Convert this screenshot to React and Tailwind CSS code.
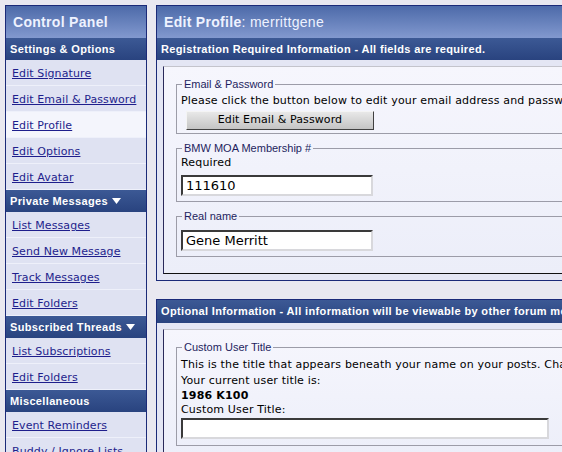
import React from "react";

const sections = [
  {
    title: "Settings & Options",
    arrow: false,
    items: ["Edit Signature", "Edit Email & Password", "Edit Profile", "Edit Options", "Edit Avatar"],
  },
  {
    title: "Private Messages",
    arrow: true,
    items: ["List Messages", "Send New Message", "Track Messages", "Edit Folders"],
  },
  {
    title: "Subscribed Threads",
    arrow: true,
    items: ["List Subscriptions", "Edit Folders"],
  },
  {
    title: "Miscellaneous",
    arrow: false,
    items: ["Event Reminders", "Buddy / Ignore Lists", "Profile Pictures"],
  },
];

const Arrow = () => (
  <svg width="9" height="6" viewBox="0 0 9 6" className="ml-[4px]">
    <path d="M0 0 H9 L4.5 6 Z" fill="#ffffff" />
  </svg>
);

const BigHeader = ({ children }) => (
  <div className="h-[32px] flex items-center bg-linear-to-b from-[#4d6aa9] to-[#8299cf] text-[#eef2ff] text-[14px] font-bold tracking-[0.3px] font-['Liberation_Sans',sans-serif]">
    {children}
  </div>
);

const SubBar = ({ children, className = "" }) => (
  <div
    className={
      "h-[22px] flex items-center bg-linear-to-b from-[#3c5995] to-[#29437f] text-white text-[11px] font-bold tracking-[0.35px] font-['Liberation_Sans',sans-serif] whitespace-nowrap " +
      className
    }
  >
    {children}
  </div>
);

const Fieldset = ({ legend, className = "", children }) => (
  <fieldset className={"border border-[#9c9ca8] pl-[4px] " + className}>
    <legend className="ml-[1px] px-[2px] text-[11px] leading-[13px] text-[#1e1e5e] font-['Liberation_Sans',sans-serif]">
      {legend}
    </legend>
    {children}
  </fieldset>
);

const TextInput = ({ value, width }) => (
  <div
    className={
      "h-[21px] flex items-center pl-[3px] bg-white border-2 border-t-[#3a3a3a] border-l-[#3a3a3a] border-r-[#d8d8dc] border-b-[#d8d8dc] text-[13px] text-black " +
      width
    }
  >
    {value}
  </div>
);

const Sidebar = () => (
  <div className="w-[142px] shrink-0 border border-[#1b2a78] bg-[#dfe2f2]">
    <BigHeader>
      <span className="pl-[7px]">Control Panel</span>
    </BigHeader>
    {sections.map((s) => (
      <div key={s.title}>
        <SubBar className="pl-[4px]">
          {s.title}
          {s.arrow && <Arrow />}
        </SubBar>
        {s.items.map((item) => (
          <div
            key={s.title + item}
            className={
              "h-[26px] flex items-center pl-[6px] pt-[4px] border-b border-[#eef0fa] text-[11px] tracking-[0.1px] " +
              (item === "Edit Profile" ? "bg-[#f4f5fc]" : "bg-[#dfe2f2]")
            }
          >
            <a href="#" className="text-[#1e1e8c] underline whitespace-nowrap">
              {item}
            </a>
          </div>
        ))}
      </div>
    ))}
  </div>
);

const MainPanel = () => (
  <div className="w-[700px] shrink-0 flex flex-col gap-[18px]">
    {/* Required info */}
    <div className="border border-[#1b2a78] bg-[#e4e6f4]">
      <BigHeader>
        <span className="pl-[7px]">Edit Profile</span>
        <span className="font-normal">: merrittgene</span>
      </BigHeader>
      <SubBar className="pl-[4px]">
        Registration Required Information - All fields are required.
      </SubBar>
      <div className="p-[6px]">
        <div className="bg-linear-to-b from-[#f6f6fd] to-[#eceef9] border-t border-[#c4c4cc] border-l border-l-[#2a2a5a] border-b border-b-[#101010] pl-[12px] pt-[11px] pb-[16px]">
          <Fieldset legend="Email & Password" className="pb-[3px]">
            <p className="pt-[3px] text-[11px] leading-[14px] tracking-[0.17px] text-black whitespace-nowrap">
              Please click the button below to edit your email address and password.
            </p>
            <button className="mt-[3px] ml-[5px] w-[188px] h-[19px] flex items-center justify-center bg-linear-to-b from-[#e8e8e8] to-[#c4c4c4] border border-t-[#f4f4f4] border-l-[#f4f4f4] border-r-[#404040] border-b-[#404040] text-[11px] tracking-[0.1px] text-black">
              Edit Email &amp; Password
            </button>
          </Fieldset>
          <Fieldset legend="BMW MOA Membership #" className="mt-[8px] pb-[5px]">
            <p className="pt-[1px] text-[11px] leading-[14px] tracking-[0.17px] text-black">Required</p>
            <div className="mt-[5px]">
              <TextInput value="111610" width="w-[192px]" />
            </div>
          </Fieldset>
          <Fieldset legend="Real name" className="mt-[8px] pb-[5px]">
            <div className="mt-[7px]">
              <TextInput value="Gene Merritt" width="w-[192px]" />
            </div>
          </Fieldset>
        </div>
      </div>
    </div>

    {/* Optional info */}
    <div className="border border-[#1b2a78] bg-[#e4e6f4]">
      <SubBar className="pl-[4px] h-[23px]">
        Optional Information - All information will be viewable by other forum members.
      </SubBar>
      <div className="p-[6px]">
        <div className="bg-linear-to-b from-[#f6f6fd] to-[#eceef9] border-t border-[#c4c4cc] border-l border-l-[#2a2a5a] pl-[12px] pt-[11px] pb-[16px]">
          <Fieldset legend="Custom User Title" className="pb-[6px]">
            <div className="pt-[3px] text-[11px] tracking-[0.17px] text-black whitespace-nowrap">
              <p className="leading-[16px]">
                This is the title that appears beneath your name on your posts. Change it here.
              </p>
              <p className="leading-[16px]">Your current user title is:</p>
              <p className="leading-[13px] font-bold">1986 K100</p>
              <p className="leading-[16px]">Custom User Title:</p>
            </div>
            <TextInput value="" width="w-[368px]" />
          </Fieldset>
        </div>
      </div>
    </div>
  </div>
);

export default function App() {
  return (
    <div className="w-[562px] h-[452px] overflow-hidden bg-[#e9e8f0] font-['DejaVu_Sans',sans-serif]">
      <div className="flex items-start gap-[9px] pl-[5px] pt-[5px]">
        <Sidebar />
        <MainPanel />
      </div>
    </div>
  );
}
